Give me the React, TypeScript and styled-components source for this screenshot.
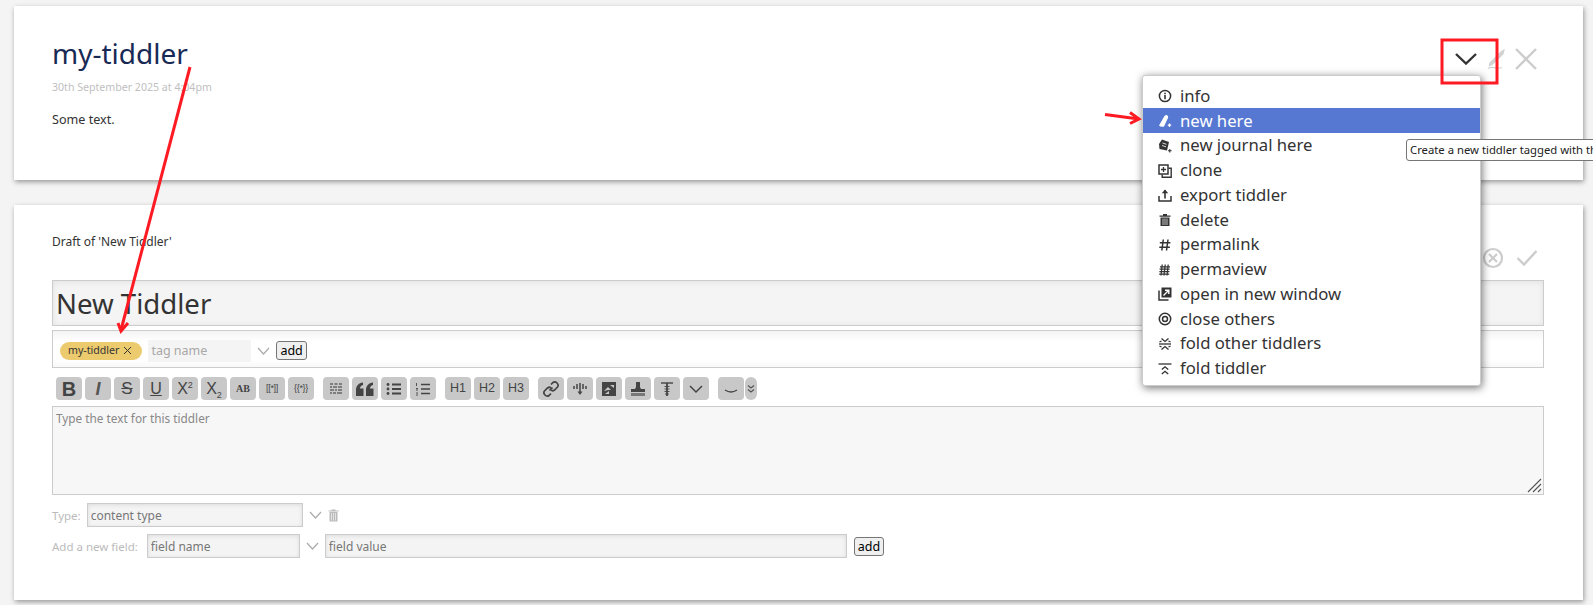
import React from "react";
import styled, { createGlobalStyle } from "styled-components";

const FONT = `"Noto Sans", "Open Sans", "Liberation Sans", sans-serif`;

const GlobalStyle = createGlobalStyle`
  html, body {
    margin: 0;
    padding: 0;
    overflow: hidden;
    background: #f4f4f4;
  }
  * {
    box-sizing: border-box;
  }
`;

const Page = styled.div`
  position: relative;
  width: 1593px;
  height: 605px;
  overflow: hidden;
  padding: 6px 10px 0 14px;
  background: #f4f4f4;
  font-family: ${FONT};
  color: #333;
`;

const Card = styled.section<{ $height: number }>`
  height: ${(p) => p.$height}px;
  margin-bottom: 25px;
  padding: 28px 39px 0 38px;
  background: #fff;
  box-shadow: 1px 2px 5px rgba(0, 0, 0, 0.38);
`;

const CardHeader = styled.div`
  display: flex;
  justify-content: space-between;
  align-items: flex-start;
`;

const Title = styled.h2`
  margin: -1px 0 0;
  font-size: 28px;
  line-height: 40px;
  font-weight: 400;
  color: #182955;
`;

const Controls = styled.div`
  display: flex;
  align-items: center;
  gap: 10px;
`;

const ViewControls = styled(Controls)`
  margin: 14px 7px 0 0;
`;

const EditControls = styled(Controls)`
  margin: 14px 6px 0 0;
  gap: 12px;
`;

const DateLine = styled.div`
  margin-top: 6px;
  font-size: 10.6px;
  line-height: 16px;
  color: #c0c0c0;
`;

const BodyText = styled.p`
  margin: 16px 0 0;
  font-size: 12.6px;
  line-height: 18px;
  color: #333;
`;

const DraftLabel = styled.div`
  font-size: 12px;
  line-height: 17px;
  color: #333;
`;

const DraftHeader = styled(CardHeader)`
  height: 47px;
`;

const TitleInput = styled.input`
  display: block;
  width: 100%;
  height: 46px;
  padding: 0 3px;
  border: 1px solid #ccc;
  outline: none;
  background: #f4f4f4;
  box-shadow: inset 0 1px 6px rgba(0, 0, 0, 0.08);
  font-family: ${FONT};
  font-size: 27.6px;
  color: #333;
`;

const TagBox = styled.div`
  display: flex;
  align-items: center;
  height: 38px;
  margin-top: 4px;
  padding: 3px 0 0 7px;
  border: 1px solid #ccc;
  background: linear-gradient(#f4f4f4, #fff 30%, #fff 80%, #f8f8f8);
`;

const TagPill = styled.span`
  display: inline-flex;
  align-items: center;
  gap: 4px;
  height: 18px;
  padding: 0 10px 1px 8px;
  border-radius: 9px;
  background: #ecca6e;
  font-size: 10.6px;
  color: #333;
`;

const TagInput = styled.input`
  width: 103px;
  height: 22px;
  margin-left: 6px;
  padding: 0 3px;
  border: none;
  outline: none;
  background: #f4f4f4;
  font-family: ${FONT};
  font-size: 12.5px;

  &::placeholder {
    color: #a8a8a8;
    opacity: 1;
  }
`;

const DropChevron = styled.svg`
  flex: none;
  width: 13px;
  height: 8px;
  margin: 0 6px;
  fill: none;
  stroke: #aaa;
  stroke-width: 1.2;
`;

const AddButton = styled.button<{ $gap?: number }>`
  height: 19px;
  margin-left: ${(p) => p.$gap ?? 0}px;
  padding: 0 3px;
  border: 1px solid #767676;
  border-radius: 3px;
  background: #efefef;
  font-family: ${FONT};
  font-size: 12.5px;
  line-height: 15px;
  color: #000;
`;

const Toolbar = styled.div`
  display: flex;
  margin: 9px 0 6px 4px;
  height: 23px;
`;

const ToolGroup = styled.div`
  display: flex;
  gap: 3px;
  margin-right: 9px;
`;

const ToolButton = styled.div<{ $narrow?: boolean }>`
  display: flex;
  align-items: center;
  justify-content: center;
  width: ${(p) => (p.$narrow ? 12 : 26)}px;
  height: 23px;
  margin-left: ${(p) => (p.$narrow ? 1 : 0)}px;
  border-radius: ${(p) => (p.$narrow ? 6 : 4)}px;
  background: #c8c8c8;
  color: #444;
  font-size: 12px;
  line-height: 1;

  svg {
    display: block;
  }
`;

const BoldMark = styled.b`
  font-family: "Liberation Sans", sans-serif;
  font-size: 20px;
  font-weight: 700;
`;

const ItalicMark = styled.i`
  font-family: "Liberation Sans", sans-serif;
  font-size: 18px;
  font-weight: 700;
  color: #555;
`;

const StrikeMark = styled.s`
  font-family: "Liberation Sans", sans-serif;
  font-size: 17px;
`;

const UnderMark = styled.u`
  font-family: "Liberation Sans", sans-serif;
  font-size: 16px;
`;

const ScriptMark = styled.span`
  font-family: "Liberation Sans", sans-serif;
  font-size: 16px;

  sup,
  sub {
    font-size: 9px;
    line-height: 0;
  }
`;

const SerifMark = styled.span`
  font-family: "Liberation Serif", serif;
  font-size: 10px;
  font-weight: 700;
`;

const TinyMark = styled.span`
  font-family: "Liberation Sans", sans-serif;
  font-size: 9px;
  letter-spacing: -0.3px;
`;

const HeadMark = styled.span`
  font-family: "Liberation Sans", sans-serif;
  font-size: 12.5px;
`;

const TextAreaWrap = styled.div`
  position: relative;
  height: 89px;
`;

const TextArea = styled.textarea`
  display: block;
  width: 100%;
  height: 89px;
  padding: 3px 3px;
  border: 1px solid #ccc;
  outline: none;
  resize: none;
  background: #f7f7f7;
  font-family: ${FONT};
  font-size: 11.8px;

  &::placeholder {
    color: #888;
    opacity: 1;
  }
`;

const ResizeGrip = styled.svg`
  position: absolute;
  right: 2px;
  bottom: 2px;
`;

const FieldRow = styled.div`
  display: flex;
  align-items: center;
  margin-top: 7px;
  font-size: 11.5px;
  color: #bbb;
`;

const TypeRow = styled(FieldRow)`
  margin-top: 8px;
`;

const FieldLabel = styled.span`
  white-space: nowrap;
`;

const FieldInput = styled.input<{ $width: number; $gap?: number }>`
  width: ${(p) => p.$width}px;
  height: 24px;
  margin-left: ${(p) => p.$gap ?? 0}px;
  padding: 0 3px;
  border: 1px solid #ccc;
  outline: none;
  background: #f4f4f4;
  box-shadow: inset 0 1px 4px rgba(0, 0, 0, 0.1);
  font-family: ${FONT};
  font-size: 12px;

  &::placeholder {
    color: #777;
    opacity: 1;
  }
`;

const Menu = styled.div`
  position: absolute;
  left: 1142px;
  top: 75px;
  width: 339px;
  height: 311px;
  padding: 7px 0;
  background: #fff;
  border: 1px solid #ccc;
  border-radius: 3px;
  box-shadow: 1px 2px 9px rgba(0, 0, 0, 0.55);
`;

const MenuRow = styled.div<{ $active?: boolean }>`
  display: flex;
  align-items: center;
  gap: 8px;
  height: 24.75px;
  padding-left: 15px;
  font-size: 16.7px;
  color: ${(p) => (p.$active ? "#fff" : "#333")};
  background: ${(p) => (p.$active ? "#5778d2" : "transparent")};
`;

const MenuIcon = styled.svg`
  flex: none;
  width: 14px;
  height: 14px;
  margin-top: 2px;
`;

const Tooltip = styled.div`
  position: absolute;
  left: 1406px;
  top: 139px;
  width: 260px;
  height: 22px;
  padding-left: 3px;
  border: 1px solid #767676;
  border-radius: 3px;
  background: #fff;
  font-size: 11.3px;
  line-height: 20px;
  white-space: nowrap;
  color: #222;
`;

const Annotations = styled.svg`
  position: absolute;
  left: 0;
  top: 0;
  pointer-events: none;
`;

type IconProps = { color?: string };

// menu icons, all on a 14x14 grid
const menuIcons: Record<string, (p: IconProps) => React.ReactElement> = {
  info: ({ color = "#333" }) => (
    <MenuIcon viewBox="0 0 14 14">
      <circle cx="7" cy="7" r="5.6" fill="none" stroke={color} strokeWidth="1.5" />
      <rect x="6.2" y="6" width="1.6" height="4.2" fill={color} />
      <rect x="6.2" y="3.7" width="1.6" height="1.5" fill={color} />
    </MenuIcon>
  ),
  newHere: ({ color = "#333" }) => (
    <MenuIcon viewBox="0 0 14 14">
      <path d="M1 11.5 L6.5 2 Q8 0.5 9.5 1.5 Q10.5 2.5 10 4 L6 12.5 Q3 13.5 1 11.5Z" fill={color} />
      <path d="M11.5 9.5v3.5M9.8 11.2h3.4" stroke={color} strokeWidth="1.3" />
    </MenuIcon>
  ),
  journal: ({ color = "#333" }) => (
    <MenuIcon viewBox="0 0 14 14">
      <path d="M4 0.5 L11 3 L9 11.5 L1.5 10 L1 5Z" fill={color} />
      <path d="M4.5 4l4 1.3M4 6.5l4 1.3" stroke="#fff" strokeWidth="0.8" />
      <path d="M11.8 10v3.4M10 11.7h3.6" stroke={color} strokeWidth="1.1" />
    </MenuIcon>
  ),
  clone: ({ color = "#333" }) => (
    <MenuIcon viewBox="0 0 14 14">
      <rect x="1" y="1" width="9" height="9" fill="none" stroke={color} strokeWidth="1.5" />
      <path d="M10.5 4.2h2.7v9h-9v-2.7" fill="none" stroke={color} strokeWidth="1.4" />
      <path d="M5.5 3v5M3 5.5h5" stroke={color} strokeWidth="1.3" />
    </MenuIcon>
  ),
  exportTiddler: ({ color = "#333" }) => (
    <MenuIcon viewBox="0 0 14 14">
      <path d="M1 8v5h12V8" fill="none" stroke={color} strokeWidth="1.5" />
      <path d="M7 10.5V2.5" stroke={color} strokeWidth="1.6" />
      <path d="M3.8 5.2 L7 1.5 L10.2 5.2Z" fill={color} />
    </MenuIcon>
  ),
  trash: ({ color = "#333" }) => (
    <MenuIcon viewBox="0 0 14 14">
      <path d="M1.5 2.5h11v1.3h-11zM5 1h4v1.5H5z" fill={color} />
      <path d="M2.5 4.5h9V13h-9z" fill={color} />
      <path d="M5 5.5v6.5M7 5.5v6.5M9 5.5v6.5" stroke="#fff" strokeWidth="0.7" />
    </MenuIcon>
  ),
  permalink: ({ color = "#333" }) => (
    <MenuIcon viewBox="0 0 14 14">
      <path d="M5.3 1.5 L3.8 12.5M10 1.5 L8.5 12.5M1.8 4.8h10.6M1.3 9.2h10.6" stroke={color} strokeWidth="1.5" fill="none" />
    </MenuIcon>
  ),
  permaview: ({ color = "#333" }) => (
    <MenuIcon viewBox="0 0 14 14">
      <path
        d="M4.2 1.5 L3 12.5M7.2 1.5 L6 12.5M10.2 1.5 L9 12.5M2 3.8h10M1.6 6.2h10M1.4 8.6h10M1.2 11h10"
        stroke={color}
        strokeWidth="1.25"
        fill="none"
      />
    </MenuIcon>
  ),
  openWindow: ({ color = "#333" }) => (
    <MenuIcon viewBox="0 0 14 14">
      <path d="M3.5 0.5h10v10h-10z" fill={color} />
      <path d="M1 3.5v9.5h9.5" fill="none" stroke={color} strokeWidth="1.5" />
      <path d="M5.5 8.5 L10 4M7 3.2h3.8V7" fill="none" stroke="#fff" strokeWidth="1.4" />
    </MenuIcon>
  ),
  closeOthers: ({ color = "#333" }) => (
    <MenuIcon viewBox="0 0 14 14">
      <circle cx="7" cy="7" r="5.7" fill="none" stroke={color} strokeWidth="1.5" />
      <circle cx="7" cy="7" r="2.5" fill="none" stroke={color} strokeWidth="1.5" />
    </MenuIcon>
  ),
  foldOthers: ({ color = "#333" }) => (
    <MenuIcon viewBox="0 0 14 14">
      <path d="M1 7h12" stroke={color} strokeWidth="1.3" />
      <path d="M3.5 1.5 L7 4.5 L10.5 1.5M1.5 5 L3.5 4M12.5 5 L10.5 4" stroke={color} strokeWidth="1.3" fill="none" />
      <path d="M3.5 12.5 L7 9.5 L10.5 12.5M1.5 9 L3.5 10M12.5 9 L10.5 10" stroke={color} strokeWidth="1.3" fill="none" />
    </MenuIcon>
  ),
  fold: ({ color = "#333" }) => (
    <MenuIcon viewBox="0 0 14 14">
      <path d="M0.5 2h13" stroke={color} strokeWidth="1.3" />
      <path d="M3.8 7.5 L7 4.8 L10.2 7.5M3.8 12 L7 9.3 L10.2 12" stroke={color} strokeWidth="1.4" fill="none" />
    </MenuIcon>
  ),
};

const menuItems = [
  { label: "info", icon: "info" },
  { label: "new here", icon: "newHere", active: true },
  { label: "new journal here", icon: "journal" },
  { label: "clone", icon: "clone" },
  { label: "export tiddler", icon: "exportTiddler" },
  { label: "delete", icon: "trash" },
  { label: "permalink", icon: "permalink" },
  { label: "permaview", icon: "permaview" },
  { label: "open in new window", icon: "openWindow" },
  { label: "close others", icon: "closeOthers" },
  { label: "fold other tiddlers", icon: "foldOthers" },
  { label: "fold tiddler", icon: "fold" },
];

const Chevron = () => (
  <DropChevron viewBox="0 0 13 8">
    <path d="M1 1 L6.5 7 L12 1" />
  </DropChevron>
);

const TypeTrash = () => (
  <svg width="11" height="13" viewBox="0 0 11 13">
    <path d="M0.5 1.5h10v1h-10zM3.5 0.5h4v1h-4z" fill="#bbb" />
    <path d="M1.5 3h8v9.5h-8z" fill="#bbb" />
    <path d="M3.5 4v7.5M5.5 4v7.5M7.5 4v7.5" stroke="#fff" strokeWidth="0.6" />
  </svg>
);

const ToolSvg = ({ children }: { children: React.ReactNode }) => (
  <svg width="18" height="18" viewBox="0 0 18 18" fill="none" stroke="#444" strokeWidth="1.5">
    {children}
  </svg>
);

export default function App() {
  return (
    <Page>
      <GlobalStyle />
      <Card $height={174}>
        <CardHeader>
          <div>
            <Title>my-tiddler</Title>
            <DateLine>30th September 2025 at 4:04pm</DateLine>
          </div>
          <ViewControls>
            <svg width="22" height="12" viewBox="0 0 22 12" fill="none" stroke="#333" strokeWidth="2.4">
              <path d="M1 1 L11 10.5 L21 1" />
            </svg>
            <svg width="18" height="21" viewBox="0 0 18 21" fill="none" stroke="#d2d2d2" strokeWidth="1.2">
              <path d="M3 14 L14 3 L17 1 L16 5 L5 15.5 L2.5 16.5Z" fill="#d2d2d2" />
              <path d="M1 19.5 C5 16.5 8 20.5 15 18.5" />
            </svg>
            <svg width="22" height="22" viewBox="0 0 22 22" fill="none" stroke="#ccc" strokeWidth="2.4">
              <path d="M1 1 L21 21M21 1 L1 21" />
            </svg>
          </ViewControls>
        </CardHeader>
        <BodyText>Some text.</BodyText>
      </Card>

      <Card $height={395}>
        <DraftHeader>
          <DraftLabel>Draft of 'New Tiddler'</DraftLabel>
          <EditControls>
            <svg width="22" height="22" viewBox="0 0 22 22" fill="none" stroke="#ccc" strokeWidth="2.2">
              <circle cx="11" cy="11" r="9" />
              <path d="M7 7 L15 15M15 7 L7 15" />
            </svg>
            <svg width="22" height="18" viewBox="0 0 22 18" fill="none" stroke="#ccc" strokeWidth="2.4">
              <path d="M1.5 9 L8 15.5 L20.5 2" />
            </svg>
          </EditControls>
        </DraftHeader>

        <TitleInput defaultValue="New Tiddler" />

        <TagBox>
          <TagPill>
            my-tiddler
            <svg width="9" height="9" viewBox="0 0 9 9" stroke="#333" strokeWidth="1">
              <path d="M1 1 L8 8M8 1 L1 8" />
            </svg>
          </TagPill>
          <TagInput placeholder="tag name" />
          <Chevron />
          <AddButton>add</AddButton>
        </TagBox>

        <Toolbar>
          <ToolGroup>
            <ToolButton><BoldMark>B</BoldMark></ToolButton>
            <ToolButton><ItalicMark>I</ItalicMark></ToolButton>
            <ToolButton><StrikeMark>S</StrikeMark></ToolButton>
            <ToolButton><UnderMark>U</UnderMark></ToolButton>
            <ToolButton><ScriptMark>X<sup>2</sup></ScriptMark></ToolButton>
            <ToolButton><ScriptMark>X<sub>2</sub></ScriptMark></ToolButton>
            <ToolButton><SerifMark>AB</SerifMark></ToolButton>
            <ToolButton><TinyMark>[[*]]</TinyMark></ToolButton>
            <ToolButton><TinyMark>{"{{*}}"}</TinyMark></ToolButton>
          </ToolGroup>
          <ToolGroup>
            <ToolButton>
              <ToolSvg>
                <path d="M3 4h3M7.5 4h3M12 4h3M3 7h2M6 7h4M11 7h4M3 10h4M8 10h2M11 10h4M3 13h2M6 13h3M10 13h5" strokeWidth="1.5" stroke="#666" />
              </ToolSvg>
            </ToolButton>
            <ToolButton>
              <svg width="20" height="16" viewBox="0 0 20 16" fill="#444">
                <path d="M1 15V9 C1 5 3.5 2 8 1.5V4 C6 4.5 5.2 5.5 5 7.5H8.5V15Z" />
                <path d="M11 15V9 C11 5 13.5 2 18 1.5V4 C16 4.5 15.2 5.5 15 7.5H18.5V15Z" />
              </svg>
            </ToolButton>
            <ToolButton>
              <ToolSvg>
                <path d="M7 4.5h9M7 9h9M7 13.5h9" strokeWidth="1.8" />
                <circle cx="3" cy="4.5" r="1.4" fill="#444" stroke="none" />
                <circle cx="3" cy="9" r="1.4" fill="#444" stroke="none" />
                <circle cx="3" cy="13.5" r="1.4" fill="#444" stroke="none" />
              </ToolSvg>
            </ToolButton>
            <ToolButton>
              <ToolSvg>
                <path d="M7 4.5h9M7 9h9M7 13.5h9" strokeWidth="1.5" />
                <path d="M2.5 3v3M2 8.5h2M2 10h2M2 13h2M2 15h2" strokeWidth="0.9" />
              </ToolSvg>
            </ToolButton>
          </ToolGroup>
          <ToolGroup>
            <ToolButton><HeadMark>H1</HeadMark></ToolButton>
            <ToolButton><HeadMark>H2</HeadMark></ToolButton>
            <ToolButton><HeadMark>H3</HeadMark></ToolButton>
          </ToolGroup>
          <ToolGroup>
            <ToolButton>
              <ToolSvg>
                <path d="M7.5 10.5 L10.5 7.5" strokeWidth="1.7" />
                <path d="M9 4.5 L11 2.5 Q13 1 15 3 Q17 5 15.5 7 L12.5 10 Q10.5 11.5 9 10" strokeWidth="1.7" />
                <path d="M9 13.5 L7 15.5 Q5 17 3 15 Q1 13 2.5 11 L5.5 8 Q7.5 6.5 9 8" strokeWidth="1.7" />
              </ToolSvg>
            </ToolButton>
            <ToolButton>
              <ToolSvg>
                <path d="M9 3v9M6 4v5M12 4v5M3 6v3M15 6v3" strokeWidth="1.5" />
                <path d="M6.5 11.5 L9 15 L11.5 11.5Z" fill="#444" stroke="none" />
              </ToolSvg>
            </ToolButton>
            <ToolButton>
              <svg width="18" height="18" viewBox="0 0 18 18">
                <rect x="2" y="2" width="14" height="14" fill="#444" />
                <path d="M4 11 L8 7 L11 10 L8 10Z M10 5h4v3z" fill="#c8c8c8" />
                <path d="M5 14 L9 11 L9 14Z" fill="#c8c8c8" />
              </svg>
            </ToolButton>
            <ToolButton>
              <svg width="18" height="18" viewBox="0 0 18 18" fill="#444">
                <path d="M7 2h4v5l1 2h4v3H2V9h4l1-2z" />
                <rect x="2" y="13" width="14" height="3" fill="#777" />
              </svg>
            </ToolButton>
            <ToolButton>
              <ToolSvg>
                <path d="M3 3h12" strokeWidth="1.4" />
                <path d="M9 3v13" strokeWidth="1.8" />
                <path d="M6.5 6.5h5M6.5 9h5M6.5 11.5h5M7 14h4" strokeWidth="0.9" />
              </ToolSvg>
            </ToolButton>
            <ToolButton>
              <ToolSvg>
                <path d="M3 6 L9 12 L15 6" strokeWidth="1.5" />
              </ToolSvg>
            </ToolButton>
          </ToolGroup>
          <ToolButton>
            <ToolSvg>
              <path d="M3 10 Q9 14 15 10" strokeWidth="1.3" />
            </ToolSvg>
          </ToolButton>
          <ToolButton $narrow>
            <svg width="8" height="10" viewBox="0 0 8 10" fill="none" stroke="#555" strokeWidth="1.2">
              <path d="M1 1.5 L4 4 L7 1.5M1 5.5 L4 8 L7 5.5" />
            </svg>
          </ToolButton>
        </Toolbar>

        <TextAreaWrap>
          <TextArea placeholder="Type the text for this tiddler" />
          <ResizeGrip width="15" height="15" viewBox="0 0 15 15" stroke="#555" strokeWidth="1.1">
            <path d="M1 14 L14 1M6 14 L14 6M11 14 L14 11" />
          </ResizeGrip>
        </TextAreaWrap>

        <TypeRow>
          <FieldLabel>Type:</FieldLabel>
          <FieldInput $width={216} $gap={6} placeholder="content type" />
          <Chevron />
          <TypeTrash />
        </TypeRow>
        <FieldRow>
          <FieldLabel>Add a new field:</FieldLabel>
          <FieldInput $width={153} $gap={9} placeholder="field name" />
          <Chevron />
          <FieldInput $width={522} placeholder="field value" />
          <AddButton $gap={7}>add</AddButton>
        </FieldRow>
      </Card>

      <Menu>
        {menuItems.map((item) => {
          const Icon = menuIcons[item.icon];
          return (
            <MenuRow key={item.label} $active={item.active}>
              <Icon color={item.active ? "#fff" : "#333"} />
              {item.label}
            </MenuRow>
          );
        })}
      </Menu>
      <Tooltip>Create a new tiddler tagged with this one</Tooltip>

      <Annotations width="1593" height="605" viewBox="0 0 1593 605" fill="none" stroke="#fe1a22">
        <rect x="1442" y="40" width="55" height="43" strokeWidth="3" />
        <path d="M190 67 L121 330" strokeWidth="3" />
        <path d="M118 323 L121 331 L128 323" strokeWidth="3" />
        <path d="M1105 114.5 L1139 119" strokeWidth="3" />
        <path d="M1130 112.5 L1139 119 L1130 123.5" strokeWidth="3" />
      </Annotations>
    </Page>
  );
}
